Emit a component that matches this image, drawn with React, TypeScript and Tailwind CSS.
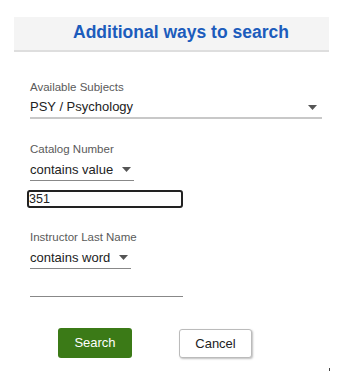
import { useState } from "react";

const Caret = () => (
  <svg width="9" height="5" viewBox="0 0 9 5" className="shrink-0">
    <path d="M0 0h9L4.5 5z" fill="#555" />
  </svg>
);

const Label = ({ children }: { children: string }) => (
  <div className="text-[11.5px] leading-[14px] text-[#5a5a5a] whitespace-nowrap">{children}</div>
);

export default function App() {
  const [catalog, setCatalog] = useState("351");
  const [instructor, setInstructor] = useState("");

  return (
    <div
      className="w-[357px] h-[372px] bg-white relative"
      style={{ fontFamily: '"Liberation Sans", Arial, sans-serif' }}
    >
      <div className="pt-[17px] px-[14px] w-[343px]">
        <div className="h-[35px] bg-[#f4f4f4] border-b-2 border-[#dedede] flex items-center justify-center">
          <h1 className="text-[17.5px] font-bold text-[#1c5cbc] pl-[19px] pb-[3px] whitespace-nowrap">
            Additional ways to search
          </h1>
        </div>
      </div>

      <div className="pl-[30px] pt-[28px]">
        <Label>Available Subjects</Label>
        <div className="w-[292px] h-[22px] mt-[3px] flex items-center justify-between border-b-2 border-[#c8c8c8] pr-[5px]">
          <span className="text-[13px] text-[#222] whitespace-nowrap">PSY / Psychology</span>
          <Caret />
        </div>

        <div className="mt-[23px]">
          <Label>Catalog Number</Label>
          <div className="w-[104px] h-[22px] mt-[3px] flex items-center gap-[9px] border-b border-[#888]">
            <span className="text-[13px] text-[#222] whitespace-nowrap">contains value</span>
            <Caret />
          </div>
          <input
            value={catalog}
            onChange={(e) => setCatalog(e.target.value)}
            className="-ml-[3px] mt-[9px] w-[156px] h-[18px] border-2 border-[#222] rounded-[3px] text-[12.5px] leading-none px-0 text-[#222] outline-none block"
          />
        </div>

        <div className="mt-[22px]">
          <Label>Instructor Last Name</Label>
          <div className="w-[101px] h-[22px] mt-[3px] flex items-center gap-[9px] border-b border-[#888]">
            <span className="text-[13px] text-[#222] whitespace-nowrap">contains word</span>
            <Caret />
          </div>
          <input
            value={instructor}
            onChange={(e) => setInstructor(e.target.value)}
            className="mt-[4px] w-[153px] h-[24px] border-b border-[#888] outline-none text-[13px] block"
          />
        </div>
      </div>

      <div className="flex items-start gap-[47px] pl-[58px] mt-[31px]">
        <button className="w-[74px] h-[30px] rounded-[3px] bg-[#3b7a17] text-white text-[13px]">
          Search
        </button>
        <button className="w-[73px] h-[29px] mt-px rounded-[3px] bg-white border border-[#bbb] shadow-[1px_1px_2px_rgba(0,0,0,0.25)] text-[#222] text-[13px]">
          Cancel
        </button>
      </div>

      <div className="absolute left-[329px] top-[368px] w-px h-[3px] bg-[#444]" />
    </div>
  );
}
